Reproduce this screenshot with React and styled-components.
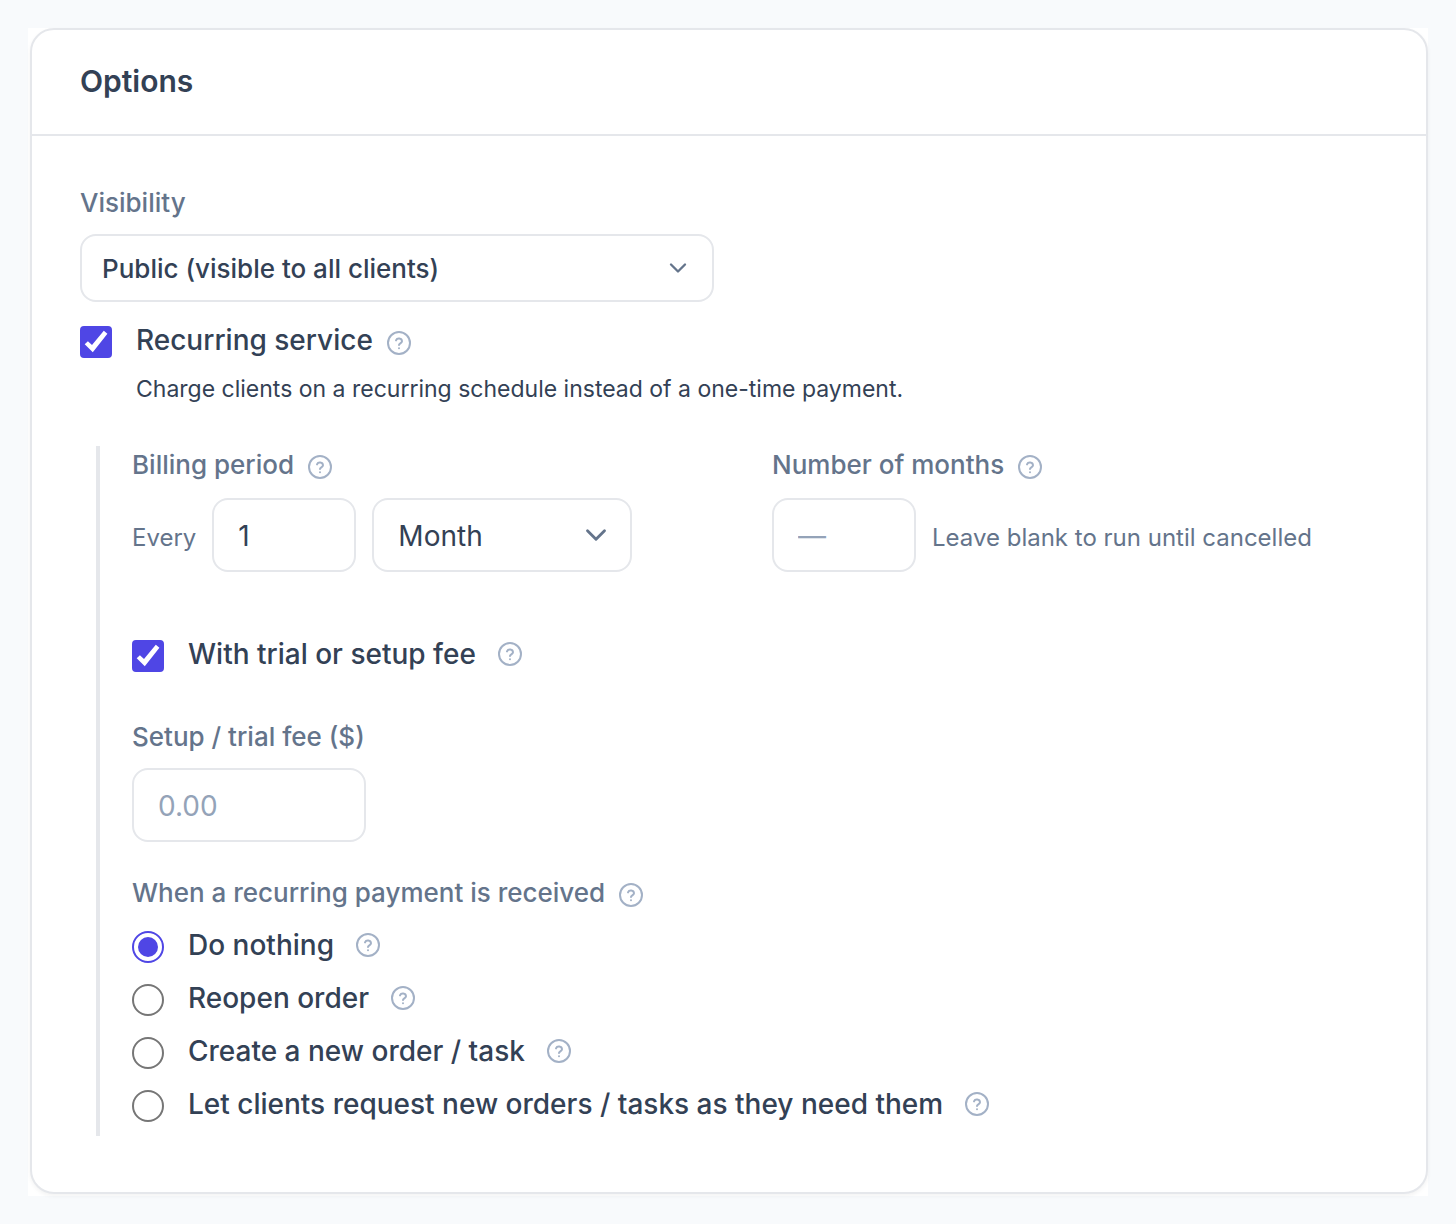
import { useState } from 'react'
import styled, { createGlobalStyle } from 'styled-components'
import { ChevronDown } from 'lucide-react'

const recurringActions = [
  { value: 'nothing', label: 'Do nothing' },
  { value: 'reopen', label: 'Reopen order' },
  { value: 'create', label: 'Create a new order / task' },
  { value: 'request', label: 'Let clients request new orders / tasks as they need them' },
]

export default function App() {
  const [recurring, setRecurring] = useState(true)
  const [trial, setTrial] = useState(true)
  const [action, setAction] = useState('nothing')

  return (
    <>
      <GlobalStyle />
      <Page>
        <Backdrop>
          <Card>
            <CardHeader>
              <Title>Options</Title>
            </CardHeader>
            <CardBody>
              <Columns>
                <div>
                  <FieldLabel htmlFor="visibility">Visibility</FieldLabel>
                  <SelectBox $top={12}>
                    <Select id="visibility" $compact defaultValue="public">
                      <option value="public">Public (visible to all clients)</option>
                      <option value="private">Private</option>
                    </Select>
                    <Chevron size={28} $right={22} />
                  </SelectBox>
                </div>
              </Columns>

              <RecurringRow>
                <Check id="recurring" checked={recurring} onChange={setRecurring} />
                <OptionLabel htmlFor="recurring">Recurring service</OptionLabel>
                <Help $gap={14} $drop={2} />
              </RecurringRow>
              <Description>
                Charge clients on a recurring schedule instead of a one-time payment.
              </Description>

              <Nested>
                <Columns>
                  <div>
                    <LabelRow>
                      <FieldLabel htmlFor="period">Billing period</FieldLabel>
                      <Help $gap={14} $drop={4} />
                    </LabelRow>
                    <ControlRow>
                      <Hint>Every</Hint>
                      <Input id="period" defaultValue="1" $width={144} />
                      <SelectBox $width={260}>
                        <Select aria-label="Period unit" defaultValue="month">
                          <option value="week">Week</option>
                          <option value="month">Month</option>
                          <option value="year">Year</option>
                        </Select>
                        <Chevron size={34} $right={19} />
                      </SelectBox>
                    </ControlRow>
                  </div>
                  <div>
                    <LabelRow>
                      <FieldLabel htmlFor="months">Number of months</FieldLabel>
                      <Help $gap={14} $drop={4} />
                    </LabelRow>
                    <ControlRow>
                      <Input id="months" placeholder="—" $width={144} />
                      <Hint>Leave blank to run until cancelled</Hint>
                    </ControlRow>
                  </div>
                </Columns>

                <TrialRow>
                  <Check id="trial" checked={trial} onChange={setTrial} />
                  <OptionLabel htmlFor="trial">With trial or setup fee</OptionLabel>
                  <Help $gap={22} />
                </TrialRow>

                <FieldLabel htmlFor="fee">Setup / trial fee ($)</FieldLabel>
                <FeeRow>
                  <Input id="fee" placeholder="0.00" $width={234} />
                </FeeRow>

                <RadioGroup role="radiogroup" aria-labelledby="received">
                  <LabelRow>
                    <GroupLabel id="received">When a recurring payment is received</GroupLabel>
                    <Help $gap={14} $drop={4} />
                  </LabelRow>
                  <RadioList>
                    {recurringActions.map(({ value, label }) => (
                      <RadioRow key={value}>
                        <Radio
                          id={value}
                          name="action"
                          value={value}
                          checked={action === value}
                          onChange={() => setAction(value)}
                        />
                        <OptionLabel htmlFor={value}>{label}</OptionLabel>
                        <Help $gap={22} />
                      </RadioRow>
                    ))}
                  </RadioList>
                </RadioGroup>
              </Nested>
            </CardBody>
          </Card>
        </Backdrop>
      </Page>
    </>
  )
}

function Help({ $gap, $drop }) {
  return (
    <HelpButton type="button" aria-label="Help" $gap={$gap} $drop={$drop}>
      <svg width="24" height="24" viewBox="0 0 24 24" fill="none">
        <circle cx="12" cy="12" r="11" />
        <path d="M9 9.4a3.1 2.8 0 0 1 6 .8c0 2-3 2.2-3 3.8" />
        <path d="M12 17.2h.01" />
      </svg>
    </HelpButton>
  )
}

function Check({ id, checked, onChange }) {
  return (
    <CheckBox>
      <CheckInput id={id} checked={checked} onChange={(e) => onChange(e.target.checked)} />
      {checked && (
        <svg width="32" height="32" viewBox="0 0 32 32" fill="#fff">
          <path d="M4.7 18.2 7.9 15.3 12 19 23.8 4.8 27.4 7.7 12.8 26.2Z" />
        </svg>
      )}
    </CheckBox>
  )
}

const GlobalStyle = createGlobalStyle`
  * {
    box-sizing: border-box;
  }
  body {
    margin: 0;
    background: #f8fafc;
    color: #334155;
    font-family: Inter, sans-serif;
  }
  input,
  select,
  button {
    margin: 0;
    font-family: inherit;
  }
`

const Page = styled.main`
  padding: 28px;
`

const Backdrop = styled.div`
  padding: 0 0 2px 2px;
  background: #fff;
`

const Card = styled.section`
  border: 2px solid #e5e7eb;
  border-radius: 24px;
  background: #fff;
  box-shadow: 0 2px 4px rgba(0, 0, 0, 0.05);
`

const CardHeader = styled.header`
  padding: 32px 48px 34px;
  border-bottom: 2px solid #e5e7eb;
`

const Title = styled.h2`
  margin: 0;
  font-size: 30px;
  font-weight: 600;
  line-height: 38px;
`

const CardBody = styled.div`
  padding: 48px 46px 56px 48px;
`

const Columns = styled.div`
  display: grid;
  grid-template-columns: 1fr 1fr;
  column-gap: 32px;
`

const FieldLabel = styled.label`
  display: block;
  color: #64748b;
  font-size: 26px;
  font-weight: 500;
  line-height: 38px;
`

const GroupLabel = styled(FieldLabel).attrs({ as: 'span' })``

const LabelRow = styled.div`
  display: flex;
  align-items: center;
`

const SelectBox = styled.div`
  display: grid;
  align-items: center;
  width: ${(props) => (props.$width ? `${props.$width}px` : 'auto')};
  margin-top: ${(props) => props.$top || 0}px;

  > * {
    grid-area: 1 / 1;
  }
`

const Select = styled.select`
  appearance: none;
  width: 100%;
  height: ${(props) => (props.$compact ? 68 : 74)}px;
  padding: ${(props) => (props.$compact ? '0 20px' : '2px 24px 0')};
  border: 2px solid #e5e7eb;
  border-radius: 16px;
  background: #fff;
  color: #334155;
  font-size: ${(props) => (props.$compact ? 26 : 28)}px;
  font-weight: ${(props) => (props.$compact ? 500 : 400)};
`

const Chevron = styled(ChevronDown)`
  justify-self: end;
  margin-right: ${(props) => props.$right}px;
  color: #64748b;
  pointer-events: none;
`

const Input = styled.input.attrs({ type: 'text' })`
  width: ${(props) => props.$width}px;
  height: 74px;
  padding: 2px 24px 0;
  border: 2px solid #e5e7eb;
  border-radius: 16px;
  background: #fff;
  color: #334155;
  font-size: 28px;

  &::placeholder {
    color: #94a3b8;
    opacity: 1;
  }
`

const ControlRow = styled.div`
  display: flex;
  align-items: center;
  gap: 16px;
  margin-top: 14px;
`

const Hint = styled.span`
  padding-top: 6px;
  color: #64748b;
  font-size: 24px;
  line-height: 32px;
  white-space: nowrap;
`

const OptionRow = styled.div`
  display: flex;
  align-items: center;
`

const RecurringRow = styled(OptionRow)`
  margin-top: 18px;
`

const TrialRow = styled(OptionRow)`
  margin: 62px 0 40px;
`

const OptionLabel = styled.label`
  margin-left: 24px;
  padding-bottom: 4px;
  font-size: 28px;
  font-weight: 500;
  line-height: 40px;
`

const Description = styled.p`
  margin: 8px 0 40px 56px;
  font-size: 23px;
  line-height: 34px;
`

const Nested = styled.div`
  margin-left: 16px;
  padding-left: 32px;
  border-left: 4px solid #e5e7eb;
`

const FeeRow = styled.div`
  display: flex;
  margin-top: 12px;
`

const HelpButton = styled.button`
  flex-shrink: 0;
  height: 24px;
  margin-left: ${(props) => props.$gap}px;
  margin-top: ${(props) => props.$drop || -4}px;
  padding: 0;
  border: 0;
  background: none;

  svg {
    display: block;
    stroke: #a3b1c6;
    stroke-width: 2;
    stroke-linecap: round;
    stroke-linejoin: round;
  }
`

const CheckBox = styled.span`
  display: grid;

  > * {
    grid-area: 1 / 1;
  }

  svg {
    pointer-events: none;
  }
`

const CheckInput = styled.input.attrs({ type: 'checkbox' })`
  appearance: none;
  width: 32px;
  height: 32px;
  border: 2px solid #767676;
  border-radius: 4px;
  background: #fff;

  &:checked {
    border-color: #4f46e5;
    background: #4f46e5;
  }
`

const RadioGroup = styled.div`
  margin-top: 32px;
`

const RadioList = styled.div`
  margin-top: 8px;
  padding-bottom: 4px;
`

const RadioRow = styled(OptionRow)`
  height: 53px;
`

const Radio = styled.input.attrs({ type: 'radio' })`
  appearance: none;
  flex-shrink: 0;
  width: 32px;
  height: 32px;
  padding: 4px;
  border: 2px solid #767676;
  border-radius: 50%;

  &:checked {
    border-color: #4f46e5;
    background: #4f46e5 content-box;
  }
`
